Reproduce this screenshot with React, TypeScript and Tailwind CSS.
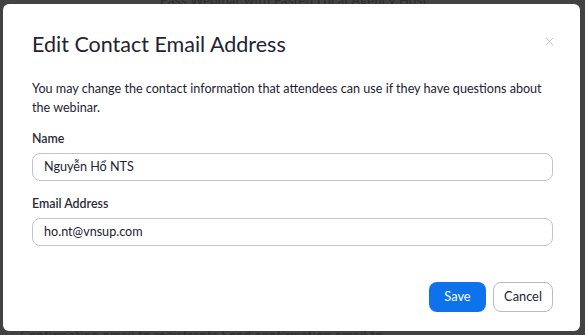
import { X } from 'lucide-react';

const font = { fontFamily: 'Lato, "Noto Sans", sans-serif' };

function Field({ label, value }: { label: string; value: string }) {
  return (
    <div className="flex flex-col">
      <label className="text-[12.4px] leading-[19px] font-semibold text-[#2b2b36]">{label}</label>
      <div className="mt-[5px] h-[28px] rounded-[8px] border border-[#c4c4c8] flex items-center px-[11px] text-[12.6px] text-[#232333]">
        {value}
      </div>
    </div>
  );
}

export default function App() {
  return (
    <div className="relative h-[335px] w-[585px] overflow-hidden bg-[#424242]" style={font}>
      {/* page behind the overlay */}
      <div className="absolute left-[160px] top-[-9px] text-[13px] text-[#2c2c2c] tracking-wide">
        Pass   Webinar with Fasten    Local Agency Host
      </div>
      <div className="absolute left-[20px] top-[326px] text-[13px] text-[#2c2c2c] tracking-wide">
        Confirmation email to registrants   Send confirmation email to
      </div>

      <div className="relative ml-[3px] mt-[4px] w-[577px] h-[327px] rounded-[6px] bg-white pl-[29px] pr-[27px] pt-[26px]">
        <div className="flex items-start justify-between">
          <h2 className="text-[21.5px] leading-[28px] text-[#232333]">Edit Contact Email Address</h2>
          <X className="mt-[5px] mr-[-3px] w-[13px] h-[13px] text-[#b5b5b8]" strokeWidth={1.4} />
        </div>

        <p className="mt-[21px] text-[12.6px] leading-[19px] text-[#232333]">
          You may change the contact information that attendees can use if they have questions about the webinar.
        </p>

        <div className="mt-[12px]">
          <Field label="Name" value="Nguyễn Hổ NTS" />
        </div>
        <div className="mt-[13px]">
          <Field label="Email Address" value="ho.nt@vnsup.com" />
        </div>

        <div className="mt-[36px] flex justify-end gap-[7px]">
          <button className="h-[30px] w-[57px] rounded-[8px] bg-[#0e72ed] text-white text-[12.8px]">Save</button>
          <button className="h-[30px] w-[60px] rounded-[8px] border border-[#babac0] bg-white text-[#232333] text-[12.8px]">
            Cancel
          </button>
        </div>
      </div>
    </div>
  );
}
